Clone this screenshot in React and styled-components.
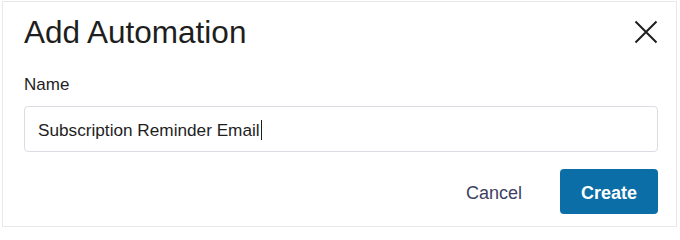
import React from 'react';
import styled, { createGlobalStyle } from 'styled-components';

const GlobalStyle = createGlobalStyle`
  body {
    margin: 0;
    background: #ffffff;
    font-family: "Liberation Sans", Arial, sans-serif;
    -webkit-font-smoothing: antialiased;
  }
`;

const Page = styled.div`
  padding: 1px 0 0 2px;
`;

const Dialog = styled.div`
  box-sizing: border-box;
  width: 675px;
  height: 226px;
  border: 1px solid #e8e8e8;
  background: #fff;
  padding: 9px 18px 12px 21px;
  display: flex;
  flex-direction: column;
`;

const Header = styled.div`
  display: flex;
  align-items: center;
  justify-content: space-between;
  height: 42px;
`;

const Title = styled.h1`
  margin: 0;
  font-size: 31.5px;
  font-weight: 400;
  line-height: 40px;
  color: #1e1e1e;
`;

const CloseButton = styled.button`
  width: 26px;
  height: 26px;
  padding: 0;
  border: 0;
  background: transparent;
  display: flex;
  align-items: center;
  justify-content: center;
  cursor: pointer;
  margin-right: -1px;
`;

const Label = styled.div`
  margin-top: 22px;
  font-size: 17px;
  line-height: 20px;
  color: #1e1e1e;
`;

const Field = styled.div`
  box-sizing: border-box;
  margin-top: 11px;
  height: 46px;
  border: 1px solid #dcdce4;
  border-radius: 4px;
  padding: 2px 13px 0;
  display: flex;
  align-items: center;
  font-size: 17.2px;
  color: #1e1e1e;
`;

const Caret = styled.span`
  display: inline-block;
  width: 1px;
  height: 20px;
  background: #1e1e1e;
  margin-left: 1px;
`;

const Footer = styled.div`
  margin-top: 17px;
  display: flex;
  justify-content: flex-end;
  align-items: center;
  gap: 17px;
`;

const Button = styled.button`
  box-sizing: border-box;
  height: 45px;
  padding: 3px 21px 0;
  border: 0;
  border-radius: 4px;
  font-family: "Liberation Sans", Arial, sans-serif;
  font-size: 18px;
  cursor: pointer;
  background: ${p => (p.$primary ? '#0b6ea6' : 'transparent')};
  color: ${p => (p.$primary ? '#ffffff' : '#3c4263')};
  font-weight: ${p => (p.$primary ? 700 : 400)};
`;

export default function App() {
  return (
    <Page>
      <GlobalStyle />
      <Dialog>
        <Header>
          <Title>Add Automation</Title>
          <CloseButton aria-label="Close">
            <svg width="24" height="24" viewBox="0 0 24 24">
              <path d="M1.5 1.5 L22.5 22.5 M22.5 1.5 L1.5 22.5" stroke="#1e1e1e" strokeWidth="2" fill="none" />
            </svg>
          </CloseButton>
        </Header>
        <Label>Name</Label>
        <Field>
          Subscription Reminder Email<Caret />
        </Field>
        <Footer>
          <Button>Cancel</Button>
          <Button $primary>Create</Button>
        </Footer>
      </Dialog>
    </Page>
  );
}
